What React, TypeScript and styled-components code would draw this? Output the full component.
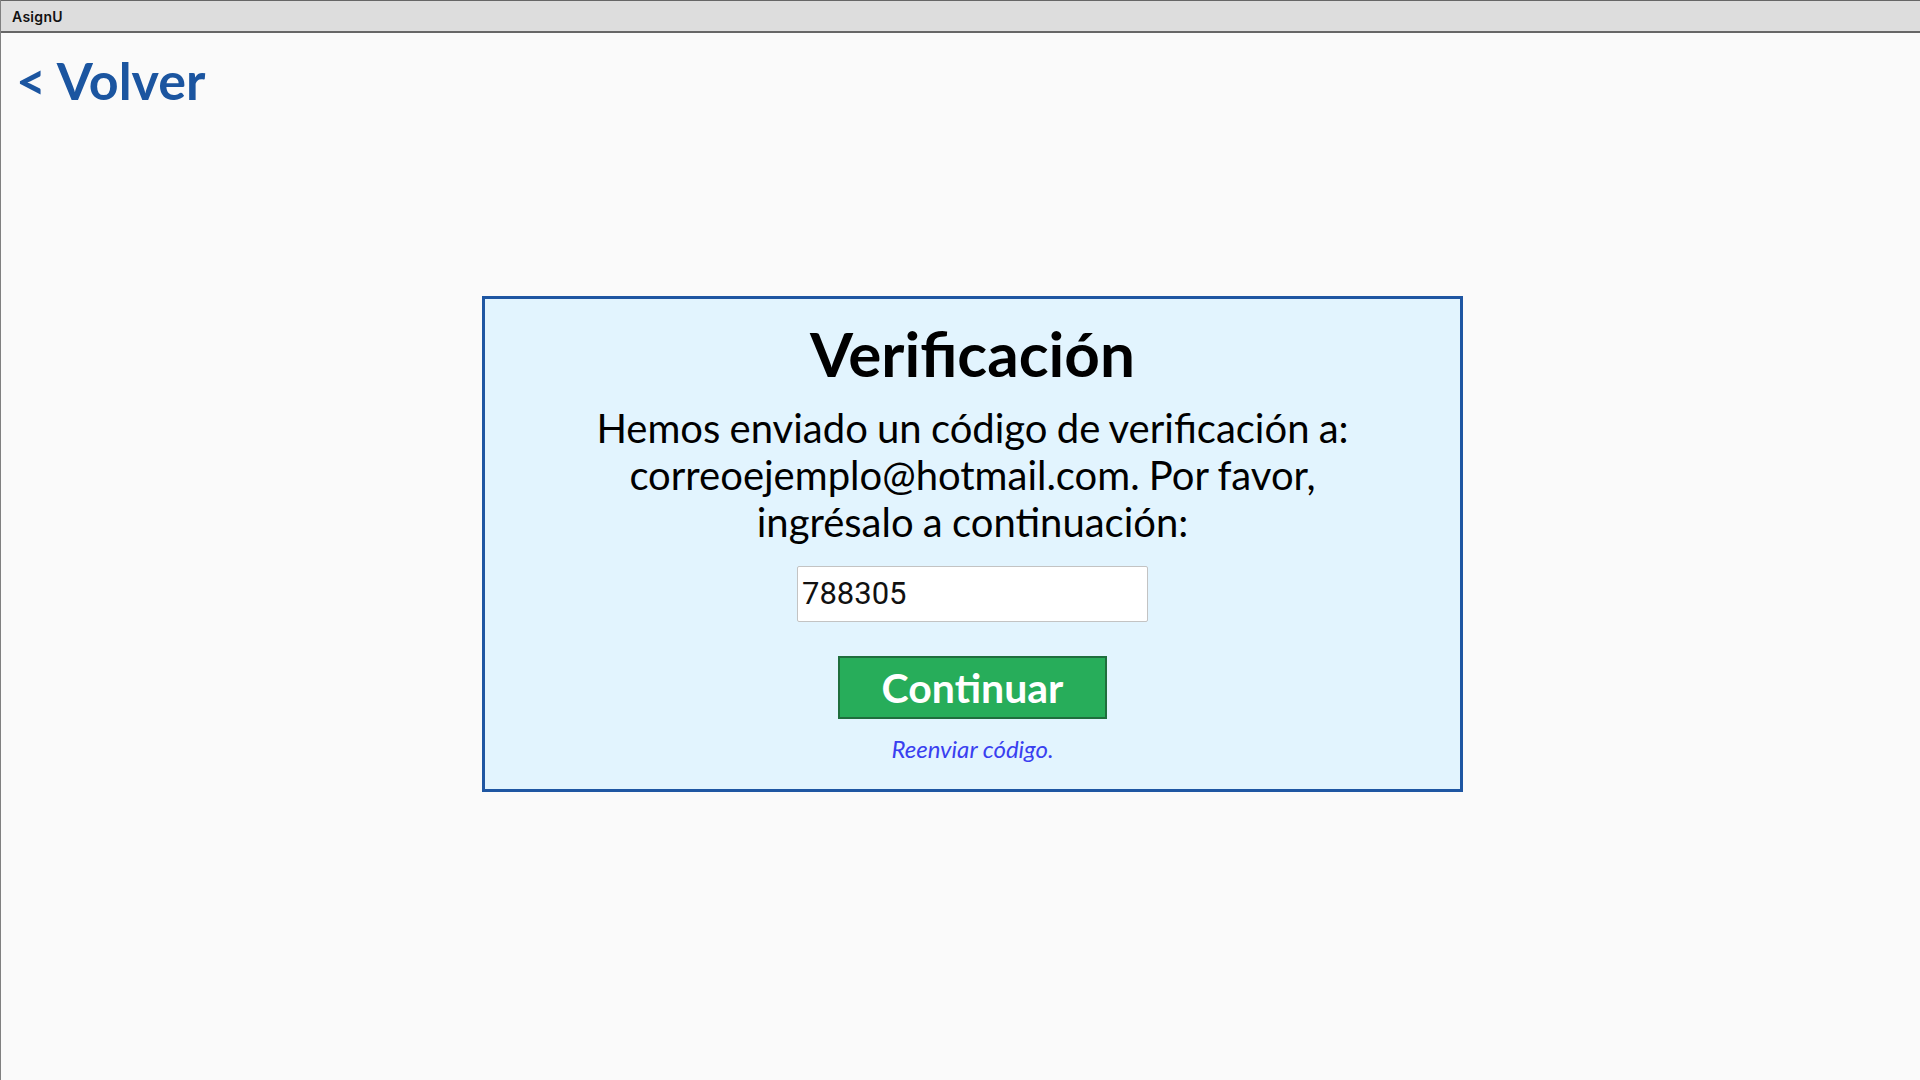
import React from "react";
import styled, { createGlobalStyle } from "styled-components";

const GlobalStyle = createGlobalStyle`
  html, body {
    margin: 0;
    padding: 0;
    background: #fafafa;
  }
  body {
    font-family: Lato, "Noto Sans", sans-serif;
  }
  * { box-sizing: border-box; }
`;

const Window = styled.div`
  min-height: 100vh;
  display: flex;
  flex-direction: column;
  border-left: 1px solid #808080;
  background: #fafafa;
`;

const TitleBar = styled.div`
  height: 33px;
  flex-shrink: 0;
  background: #dddddd;
  border-top: 1px solid #666666;
  border-bottom: 2px solid #666666;
  display: flex;
  align-items: center;
  padding-left: 11px;
  font-family: Inter, "Noto Sans", sans-serif;
  font-size: 14px;
  font-weight: 600;
  letter-spacing: 0.3px;
  color: #111111;
`;

const Header = styled.div`
  padding: 16px 0 0 15px;
`;

const BackLink = styled.a`
  font-family: Lato, sans-serif;
  font-weight: 700;
  font-size: 52px;
  line-height: 1.2;
  color: #1b55a0;
  text-decoration: none;
  cursor: pointer;
`;

const Main = styled.main`
  display: flex;
  flex-direction: column;
  align-items: center;
  padding-left: 24px;
  padding-top: 185px;
`;

const Card = styled.section`
  width: 981px;
  border: 3px solid #1e56a2;
  background: #e2f4fe;
  display: flex;
  flex-direction: column;
  align-items: center;
  padding: 17px 0 25px;
`;

const Title = styled.h1`
  margin: 0;
  font-family: Lato, sans-serif;
  font-weight: 700;
  font-size: 62px;
  line-height: 1.2;
  color: #000000;
`;

const Message = styled.p`
  margin: 14px 0 0;
  max-width: 770px;
  text-align: center;
  font-family: Lato, sans-serif;
  font-weight: 400;
  font-size: 40px;
  line-height: 47px;
  word-spacing: -1px;
  color: #000000;
`;

const CodeInput = styled.input`
  margin-top: 20px;
  width: 351px;
  height: 56px;
  flex-shrink: 0;
  border: 1px solid #c3c3c3;
  border-radius: 2px;
  background: #ffffff;
  padding: 0 4px;
  font-family: Roboto, sans-serif;
  font-size: 31px;
  color: #111111;
  outline: none;
`;

const ContinueButton = styled.button`
  margin-top: 34px;
  width: 269px;
  height: 63px;
  flex-shrink: 0;
  background: #27ad5a;
  border: 2px solid #1f6e3d;
  border-radius: 0;
  color: #ffffff;
  font-family: Lato, sans-serif;
  font-weight: 700;
  font-size: 41px;
  line-height: 1;
  padding: 0;
  cursor: pointer;
`;

const ResendLink = styled.a`
  margin-top: 16px;
  font-family: Lato, sans-serif;
  font-style: italic;
  font-size: 24px;
  line-height: 1.2;
  color: #3a3ff0;
  cursor: pointer;
`;

export default function App() {
  return (
    <>
      <GlobalStyle />
      <Window>
        <TitleBar>AsignU</TitleBar>
        <Header>
          <BackLink>&lt; Volver</BackLink>
        </Header>
        <Main>
          <Card>
            <Title>Verificación</Title>
            <Message>
              Hemos enviado un código de verificación a: correoejemplo@hotmail.com. Por favor, ingrésalo a continuación:
            </Message>
            <CodeInput defaultValue="788305" />
            <ContinueButton>Continuar</ContinueButton>
            <ResendLink>Reenviar código.</ResendLink>
          </Card>
        </Main>
      </Window>
    </>
  );
}
